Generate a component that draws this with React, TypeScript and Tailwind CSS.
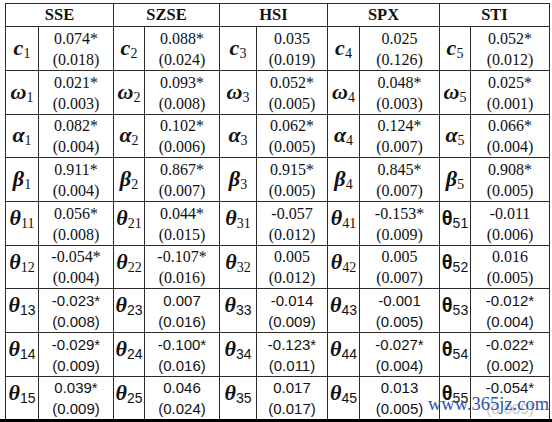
import { Fragment } from "react";

type Row = {
  sym: string;
  subs: string[];
  theta: boolean;
  sans: boolean;
  h: string;
  cells: [string, string][];
};

const groups = ["SSE", "SZSE", "HSI", "SPX", "STI"];

const rows: Row[] = [
  {
    sym: "c",
    subs: ["1", "2", "3", "4", "5"],
    theta: false,
    sans: false,
    h: "h-[44px]",
    cells: [
      ["0.074*", "(0.018)"],
      ["0.088*", "(0.024)"],
      ["0.035", "(0.019)"],
      ["0.025", "(0.126)"],
      ["0.052*", "(0.012)"],
    ],
  },
  {
    sym: "ω",
    subs: ["1", "2", "3", "4", "5"],
    theta: false,
    sans: false,
    h: "h-[44px]",
    cells: [
      ["0.021*", "(0.003)"],
      ["0.093*", "(0.008)"],
      ["0.052*", "(0.005)"],
      ["0.048*", "(0.003)"],
      ["0.025*", "(0.001)"],
    ],
  },
  {
    sym: "α",
    subs: ["1", "2", "3", "4", "5"],
    theta: false,
    sans: false,
    h: "h-[43px]",
    cells: [
      ["0.082*", "(0.004)"],
      ["0.102*", "(0.006)"],
      ["0.062*", "(0.005)"],
      ["0.124*", "(0.007)"],
      ["0.066*", "(0.004)"],
    ],
  },
  {
    sym: "β",
    subs: ["1", "2", "3", "4", "5"],
    theta: false,
    sans: false,
    h: "h-[44px]",
    cells: [
      ["0.911*", "(0.004)"],
      ["0.867*", "(0.007)"],
      ["0.915*", "(0.005)"],
      ["0.845*", "(0.007)"],
      ["0.908*", "(0.005)"],
    ],
  },
  {
    sym: "θ",
    subs: ["11", "21", "31", "41", "51"],
    theta: true,
    sans: false,
    h: "h-[44px]",
    cells: [
      ["0.056*", "(0.008)"],
      ["0.044*", "(0.015)"],
      ["-0.057", "(0.012)"],
      ["-0.153*", "(0.009)"],
      ["-0.011", "(0.006)"],
    ],
  },
  {
    sym: "θ",
    subs: ["12", "22", "32", "42", "52"],
    theta: true,
    sans: false,
    h: "h-[43px]",
    cells: [
      ["-0.054*", "(0.004)"],
      ["-0.107*", "(0.016)"],
      ["0.005", "(0.012)"],
      ["0.005", "(0.007)"],
      ["0.016", "(0.005)"],
    ],
  },
  {
    sym: "θ",
    subs: ["13", "23", "33", "43", "53"],
    theta: true,
    sans: true,
    h: "h-[44px]",
    cells: [
      ["-0.023*", "(0.008)"],
      ["0.007", "(0.016)"],
      ["-0.014", "(0.009)"],
      ["-0.001", "(0.005)"],
      ["-0.012*", "(0.004)"],
    ],
  },
  {
    sym: "θ",
    subs: ["14", "24", "34", "44", "54"],
    theta: true,
    sans: true,
    h: "h-[44px]",
    cells: [
      ["-0.029*", "(0.009)"],
      ["-0.100*", "(0.016)"],
      ["-0.123*", "(0.011)"],
      ["-0.027*", "(0.004)"],
      ["-0.022*", "(0.002)"],
    ],
  },
  {
    sym: "θ",
    subs: ["15", "25", "35", "45", "55"],
    theta: true,
    sans: true,
    h: "h-[43px]",
    cells: [
      ["0.039*", "(0.009)"],
      ["0.046", "(0.024)"],
      ["0.017", "(0.017)"],
      ["0.013", "(0.005)"],
      ["-0.054*", "(0.009)"],
    ],
  },
];

const serif = "font-['Liberation_Serif',serif]";
const sans = "font-['Liberation_Sans',sans-serif]";

function Symbol({ row, i }: { row: Row; i: number }) {
  // STI thetas are set upright in a sans face in the source
  const upright = row.theta && i === 4;
  return (
    <span className="whitespace-nowrap leading-none">
      <span
        className={
          upright
            ? `${sans} text-[20px] font-bold`
            : `${serif} text-[22px] font-bold italic`
        }
      >
        {row.sym}
      </span>
      <span
        className={`${row.sans || upright ? sans : serif} relative top-[3px] text-[14px]`}
      >
        {row.subs[i]}
      </span>
    </span>
  );
}

export default function App() {
  return (
    <div className="relative h-[422px] w-[552px] overflow-hidden bg-white pl-[5px] pt-[3px] text-[#111]">
      <table className="table-fixed border-collapse">
        <colgroup>
          <col className="w-[33px]" />
          <col className="w-[75px]" />
          <col className="w-[31px]" />
          <col className="w-[75px]" />
          <col className="w-[37px]" />
          <col className="w-[71px]" />
          <col className="w-[32px]" />
          <col className="w-[80px]" />
          <col className="w-[31px]" />
          <col className="w-[79px]" />
        </colgroup>
        <thead>
          <tr className="h-[23px]">
            {groups.map((g) => (
              <th
                key={g}
                colSpan={2}
                className={`${serif} border border-[#2a2a2a] p-0 text-[16.5px] font-bold leading-none`}
              >
                {g}
              </th>
            ))}
          </tr>
        </thead>
        <tbody>
          {rows.map((row, r) => (
            <tr key={r} className={row.h}>
              {row.cells.map(([v, se], i) => (
                <Fragment key={i}>
                  <td
                    className={`border border-[#2a2a2a] p-0 text-center ${
                      row.theta ? "pt-[5px] align-top" : "align-middle"
                    }`}
                  >
                    <Symbol row={row} i={i} />
                  </td>
                  <td
                    className={`border border-[#2a2a2a] p-0 text-center align-middle ${
                      row.sans ? `${sans} text-[15px]` : `${serif} text-[16px]`
                    } leading-[21px]`}
                  >
                    <div>{v}</div>
                    <div className={r === 8 && i === 4 ? "text-[#c8c8c8]" : ""}>{se}</div>
                  </td>
                </Fragment>
              ))}
            </tr>
          ))}
        </tbody>
      </table>
      <div className="absolute bottom-0 left-0 h-[3px] w-full bg-black" />
      <div
        className={`${serif} absolute left-[428px] top-[395px] text-[18.5px] leading-none text-[#2d52ae]`}
      >
        www.365jz.com
      </div>
    </div>
  );
}
